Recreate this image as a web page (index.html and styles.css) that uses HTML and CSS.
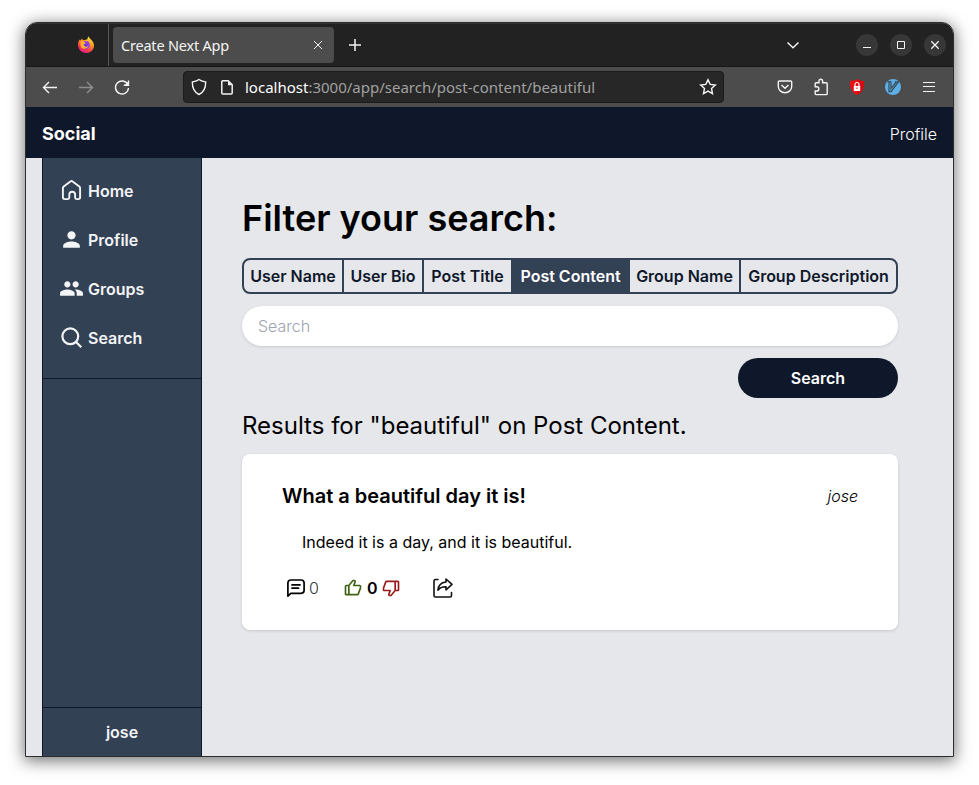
FILE: index.html
```html
<!DOCTYPE html>
<html lang="en">
<head>
<meta charset="utf-8">
<title>Create Next App</title>
<link rel="stylesheet" href="styles.css">
</head>
<body>
<div class="window">
  <div class="tabbar">
    <div class="pinned">
      <svg width="18" height="18" viewBox="0 0 18 18">
        <defs>
          <linearGradient id="fox" x1="0.8" y1="0" x2="0.3" y2="1"><stop offset="0" stop-color="#fff14a"/><stop offset=".4" stop-color="#ff9a1f"/><stop offset=".75" stop-color="#ff3a47"/><stop offset="1" stop-color="#e2189b"/></linearGradient>
        </defs>
        <path fill="url(#fox)" d="M1 8C1 6 2 4.500 3 3.300L3.500 4.600C4.300 3.800 4.700 3.200 5 2.500C5.400 3.500 6 4 7 4.200L10.500 3.200C10.300 2 10.800 1 11.800.4C12 2.600 16.900 4.400 17 9.500C17 14 13.500 17 9 17C4.500 17 1 13.500 1 8Z"/>
        <circle cx="8.800" cy="9" r="4" fill="#9542e8"/>
        <path fill="#ffb02c" d="M3.500 6C5 5 7 5 8.800 7.200C8.500 8 7.500 8 6.500 8.600C6.500 10.500 9 11.500 11 10C10.500 13 5 14 3.800 10.500Z"/>
        <circle cx="9" cy="8.800" r="1.600" fill="#603bd6"/>
      </svg>
    </div>
    <div class="tab">
      <span class="tab-title">Create Next App</span>
      <svg width="10" height="10" viewBox="0 0 10 10" class="line"><path d="M1 1l8 8M9 1l-8 8"/></svg>
    </div>
    <svg class="line new-tab" width="14" height="14" viewBox="0 0 14 14" stroke-width="1.500"><path d="M7 1v12M1 7h12"/></svg>
    <svg class="line all-tabs" width="14" height="8" viewBox="0 0 14 8" stroke-width="1.500"><path d="M1.500 1.500L7 6.700l5.500-5.200"/></svg>
    <div class="controls">
      <span class="control"><svg class="line" width="10" height="10" viewBox="0 0 10 10"><path d="M1 7.500h8"/></svg></span>
      <span class="control"><svg class="line" width="10" height="10" viewBox="0 0 10 10"><path d="M1.500 1.500h7v7h-7z"/></svg></span>
      <span class="control"><svg class="line" width="10" height="10" viewBox="0 0 10 10" stroke-width="1.300"><path d="M1.300 1.300l7.400 7.400M8.700 1.300l-7.400 7.400"/></svg></span>
    </div>
  </div>
  <div class="toolbar">
    <div class="tool"><svg class="line" width="16" height="16" viewBox="0 0 16 16" stroke-width="1.400"><path d="M15 8.500H1.500M7 3L1.500 8.500L7 14"/></svg></div>
    <div class="tool dim"><svg class="line" width="16" height="16" viewBox="0 0 16 16" stroke-width="1.400"><path d="M1 8.500h13.500M9 3l5.500 5.500L9 14"/></svg></div>
    <div class="tool"><svg class="line" width="16" height="16" viewBox="0 0 16 16" stroke-width="1.400"><path d="M13.800 5.500A6.500 6.500 0 1 0 14.500 9M14.500 1.500v4.700H9.800"/><path d="M14.800 2v4.500h-4.500z" fill="#f4f4f4" stroke="none"/></svg></div>
    <div class="urlbar">
      <svg class="line" width="16" height="18" viewBox="0 0 16 18" stroke-width="1.400"><path d="M8 1.500C10 3 12.500 3.500 14.700 4C14.700 10 12.500 14.500 8 16.500C3.500 14.500 1.300 10 1.300 4C3.500 3.500 6 3 8 1.500Z"/></svg>
      <svg class="line page-icon" width="12" height="15" viewBox="0 0 12 15" stroke-width="1.500"><path d="M2 .8h5.200L11.200 4.800v8.200a1 1 0 0 1-1 1H1.800a1 1 0 0 1-1-1V1.800a1 1 0 0 1 1-1z"/><path d="M7 1v4.200h4.200z" fill="#f4f4f4" stroke="none"/></svg>
      <span class="url"><b>localhost</b>:3000/app/search/post-content/beautiful</span>
      <svg class="line star" width="18" height="18" viewBox="0 0 18 18" stroke-width="1.400"><path d="M9 1.700l2.200 4.700 5.100.6-3.800 3.500 1 5.200L9 13.100l-4.500 2.600 1-5.200L1.700 7l5.100-.6z"/></svg>
    </div>
    <div class="tool"><svg class="line" width="16" height="16" viewBox="0 0 16 16" stroke-width="1.400"><path d="M2.300 2h11.400q1 0 1 1v4.500a6.500 6 0 0 1-13.400 0V3q0-1 1-1zM4.500 6L8 9.300 11.500 6"/></svg></div>
    <div class="tool"><svg class="line" width="16" height="18" viewBox="0 0 16 18" stroke-width="1.400"><path d="M2.200 8V5.700q0-.9.900-.9H6V3a1.800 1.800 0 0 1 3.600 0v1.800h3.700q.9 0 .9.900v10q0 .9-.9.900H3.100q-.9 0-.9-.9V13h1.500a2 2 0 0 0 0-4.200H1.500"/></svg></div>
    <div class="tool"><svg width="16" height="16" viewBox="0 0 16 16"><path fill="#f00c12" d="M8 0C10 1.500 12 2 15 2C15.200 8 14 13 8 16C2 13 .8 8 1 2C4 2 6 1.500 8 0Z"/><path fill="#d90712" d="M8 0C10 1.500 12 2 15 2C15.200 8 14 13 8 16Z"/><rect x="4.800" y="7" width="6.400" height="5" rx=".6" fill="#fff"/><path d="M6 7V5.500a2 2 0 0 1 4 0V7" fill="none" stroke="#fff" stroke-width="1.200"/><path d="M8 8.500v1.500" stroke="#d90712"/></svg></div>
    <div class="tool"><svg width="16" height="16" viewBox="0 0 16 16"><circle cx="8" cy="8" r="8" fill="#5eafe6"/><path d="M2.300 2.700h4M4 3v9.500h2.200L13.500 3H9.700M6 3v6.500l5-6" fill="none" stroke="#3b5261" stroke-width="1.300"/></svg></div>
    <div class="tool"><svg class="line" width="14" height="12" viewBox="0 0 14 12"><path d="M1 1.500h12M1 5.500h12M1 10.500h12"/></svg></div>
  </div>
  <header class="header"><strong>Social</strong><span>Profile</span></header>
  <div class="page">
    <aside class="sidebar">
      <nav class="nav">
        <a class="nav-item"><svg width="25" height="25" viewBox="0 0 25 25" fill="none" stroke="#f3f4f6" stroke-width="1.900" stroke-linejoin="round"><path d="M3.900 10.200q0-1 .8-1.700L11.400 3.400q1.100-.9 2.200 0l6.700 5.100q.8.700.8 1.700v9.100q0 1.800-1.800 1.800h-1.700q-1.500 0-1.500-1.500v-3a2.900 2.900 0 0 0-5.800 0v3q0 1.500-1.500 1.500H5.700q-1.800 0-1.800-1.800z"/></svg>Home</a>
        <a class="nav-item"><svg width="25" height="25" viewBox="0 0 24 24" fill="#f3f4f6"><path d="M12 12c2.210 0 4-1.790 4-4s-1.790-4-4-4-4 1.790-4 4 1.790 4 4 4zm0 2c-2.670 0-8 1.340-8 4v2h16v-2c0-2.660-5.330-4-8-4z"/></svg>Profile</a>
        <a class="nav-item"><svg width="25" height="25" viewBox="0 0 24 24" fill="#f3f4f6"><path d="M16 11c1.660 0 2.990-1.340 2.990-3S17.660 5 16 5c-1.660 0-3 1.340-3 3s1.340 3 3 3zm-8 0c1.660 0 2.990-1.340 2.990-3S9.660 5 8 5C6.340 5 5 6.340 5 8s1.340 3 3 3zm0 2c-2.330 0-7 1.170-7 3.500V19h14v-2.500c0-2.330-4.670-3.500-7-3.500zm8 0c-.29 0-.62.020-.97.050 1.160.84 1.970 1.970 1.970 3.450V19h6v-2.500c0-2.330-4.670-3.500-7-3.500z"/></svg>Groups</a>
        <a class="nav-item"><svg width="25" height="25" viewBox="0 0 25 25" fill="none" stroke="#f3f4f6" stroke-width="2.200"><circle cx="11.300" cy="11.300" r="7.900"/><path d="M17 17l5.300 5.300"/></svg>Search</a>
      </nav>
      <div class="account">jose</div>
    </aside>
    <main class="main">
      <h1>Filter your search:</h1>
      <div class="filters">
        <span>User Name</span><span>User Bio</span><span class="before-active">Post Title</span><span class="active">Post Content</span><span>Group Name</span><span>Group Description</span>
      </div>
      <input class="search-input" type="text" placeholder="Search">
      <button class="search-button">Search</button>
      <h2>Results for "beautiful" on Post Content.</h2>
      <article class="card">
        <div class="card-head"><h3>What a beautiful day it is!</h3><em>jose</em></div>
        <p>Indeed it is a day, and it is beautiful.</p>
        <div class="actions">
          <svg width="20" height="20" viewBox="0 0 20 20" fill="none" stroke="#000" stroke-width="1.700" stroke-linejoin="round" stroke-linecap="round"><path d="M1.900 18.200V5q0-3 3-3h10.200q3 0 3 3v7.300q0 3-3 3H4.800zM6 6.900h8M6 10.200h6.500"/></svg>
          <span class="comments">0</span>
          <svg width="20" height="20" viewBox="0 0 24 24" fill="#3f6212"><path d="M20 8h-5.612l1.123-3.367c.202-.608.1-1.282-.275-1.802S14.253 2 13.612 2H12c-.297 0-.578.132-.769.360L6.531 8H4c-1.103 0-2 .897-2 2v9c0 1.103.897 2 2 2h13.307a2.010 2.010 0 0 0 1.873-1.298l2.757-7.351A1 1 0 0 0 22 12v-2c0-1.103-.897-2-2-2zM4 10h2v9H4v-9zm16 1.819L17.307 19H8V9.362L12.468 4h1.146l-1.562 4.683A.998.998 0 0 0 13 10h7v1.819z"/></svg>
          <span class="votes">0</span>
          <svg width="20" height="20" viewBox="0 0 24 24" fill="#991b1b"><path transform="rotate(180 12 12)" d="M20 8h-5.612l1.123-3.367c.202-.608.1-1.282-.275-1.802S14.253 2 13.612 2H12c-.297 0-.578.132-.769.360L6.531 8H4c-1.103 0-2 .897-2 2v9c0 1.103.897 2 2 2h13.307a2.010 2.010 0 0 0 1.873-1.298l2.757-7.351A1 1 0 0 0 22 12v-2c0-1.103-.897-2-2-2zM4 10h2v9H4v-9zm16 1.819L17.307 19H8V9.362L12.468 4h1.146l-1.562 4.683A.998.998 0 0 0 13 10h7v1.819z"/></svg>
          <svg class="share" width="22" height="22" viewBox="0 0 22 22" fill="none" stroke="#111" stroke-width="1.600" stroke-linejoin="round" stroke-linecap="round"><path d="M6 2.500H3.500q-1.500 0-1.500 1.500v14.500q0 1.500 1.500 1.500h14.500q1.500 0 1.500-1.500V15.500M14 2l6 5.400-6 5.400V9.800C10.500 9.600 8 10.600 6 13.200C6.300 8.500 9 5.500 14 5z"/></svg>
        </div>
      </article>
    </main>
  </div>
</div>
</body>
</html>
```
FILE: styles.css
```css
* { box-sizing: border-box; }
body {
  margin: 0;
  padding: 22px 25px 28px;
  height: 785px;
  background: #fff;
  font-family: Inter, "Liberation Sans", sans-serif;
  font-size: 16px;
  line-height: 24px;
  color: #000;
  overflow: hidden;
}
svg { display: block; flex: none; }
.window {
  display: flex;
  flex-direction: column;
  width: 929px;
  height: 735px;
  border: 1px solid #2d2d2d;
  border-radius: 12px 12px 0 0;
  overflow: hidden;
  box-shadow: 0 3px 16px 1px rgba(0, 0, 0, .55);
}
.line { fill: none; stroke: #f4f4f4; }
.tabbar {
  display: flex;
  align-items: center;
  flex: none;
  height: 44px;
  background: #222;
  border-top: 1px solid #333;
  border-bottom: 1px solid #171717;
  font: 15px "Noto Sans", sans-serif;
  color: #f4f4f4;
}
.pinned {
  display: flex;
  justify-content: flex-end;
  align-items: center;
  width: 83px;
  height: 100%;
  padding-right: 13px;
  border-right: 1px solid #555;
}
.tab {
  display: flex;
  align-items: center;
  justify-content: space-between;
  width: 221px;
  height: 36px;
  margin-left: 4px;
  padding: 0 11px 0 8px;
  border-radius: 4px;
  background: #4c4c4c;
}
.tab-title { font-size: 14.500px; letter-spacing: -.2px; }
.new-tab { margin-left: 14px; }
.all-tabs { margin-left: auto; }
.controls { display: flex; gap: 12px; margin: 0 7px 0 56px; }
.control {
  display: flex;
  align-items: center;
  justify-content: center;
  width: 22px;
  height: 22px;
  border-radius: 50%;
  background: #373737;
}
.toolbar {
  display: flex;
  align-items: center;
  flex: none;
  height: 40px;
  padding: 0 6px;
  background: #4c4c4c;
}
.tool { display: flex; align-items: center; justify-content: center; width: 36px; height: 36px; }
.dim { opacity: .4; }
.urlbar {
  display: flex;
  align-items: center;
  width: 541px;
  height: 32px;
  margin: 0 43px;
  padding: 0 6px 0 7px;
  border: 1px solid #1b1b1b;
  border-radius: 4px;
  background: #272727;
}
.page-icon { margin-left: 14px; }
.url { margin-left: 12px; font: 15px "Noto Sans", sans-serif; color: #a0a0a0; white-space: nowrap; }
.url b { font-weight: 400; color: #fff; }
.star { margin-left: auto; }
.header {
  display: flex;
  align-items: center;
  justify-content: space-between;
  flex: none;
  height: 51px;
  padding: 3px 16px 0;
  background: #0f172a;
  color: #fff;
}
.header strong { font-size: 18px; font-weight: 700; }
.header span { font-weight: 300; }
.page { display: flex; flex: 1; min-height: 0; padding-left: 16px; background: #e5e7eb; }
.sidebar {
  display: flex;
  flex-direction: column;
  justify-content: space-between;
  flex: none;
  width: 160px;
  background: #334155;
  border: solid #0f172a;
  border-width: 0 1px;
  color: #f3f4f6;
  font-weight: 600;
}
.nav { height: 221px; padding-top: 8px; border-bottom: 1px solid #0f172a; }
.nav-item { display: flex; align-items: center; gap: 4px; height: 49px; padding-left: 16px; }
.account { height: 49px; border-top: 1px solid #0f172a; line-height: 48px; text-align: center; }
.main { display: flex; flex-direction: column; width: 656px; margin-left: 40px; padding-top: 40px; }
h1, h2, h3, p { margin: 0; }
h1 { font-size: 36px; font-weight: 600; line-height: 40px; }
.filters {
  display: grid;
  grid-template-columns: 100px 80px 87px 119px 111px 155px;
  height: 36px;
  margin-top: 20px;
  border: 2px solid #334155;
  border-radius: 8px;
  overflow: hidden;
  color: #0f172a;
  font-weight: 600;
  line-height: 32px;
  text-align: center;
  white-space: nowrap;
}
.filters span { border-right: 2px solid #334155; }
.filters .before-active, .filters .active, .filters span:last-child { border-right: 0; }
.filters .active { background: #334155; color: #fff; }
.search-input {
  height: 40px;
  margin-top: 12px;
  padding: 0 16px;
  border: 0;
  border-radius: 20px;
  background: #fff;
  box-shadow: 0 1px 3px rgba(0, 0, 0, .12);
  font: 300 16px Inter, sans-serif;
}
.search-input::placeholder { color: #9ca3af; opacity: 1; }
.search-button {
  align-self: flex-end;
  width: 160px;
  height: 40px;
  margin-top: 12px;
  border: 0;
  border-radius: 20px;
  background: #0f172a;
  color: #fff;
  font: 600 16px Inter, sans-serif;
}
h2 { margin-top: 12px; font-size: 24px; font-weight: 400; line-height: 32px; }
.card {
  height: 176px;
  margin-top: 12px;
  padding: 28px 40px;
  border-radius: 8px;
  background: #fff;
  box-shadow: 0 1px 3px rgba(0, 0, 0, .14);
}
.card-head { display: flex; justify-content: space-between; align-items: center; height: 28px; }
h3 { font-size: 20px; font-weight: 600; }
.card em { font-weight: 300; }
.card p { margin: 20px 0 0 20px; }
.actions { display: flex; align-items: center; height: 24px; margin: 22px 0 0 4px; }
.comments { margin: 0 24px 0 3px; font-weight: 300; color: #333; }
.votes { margin: 0 4px; font-weight: 600; }
.share { margin-left: 31px; }
```
